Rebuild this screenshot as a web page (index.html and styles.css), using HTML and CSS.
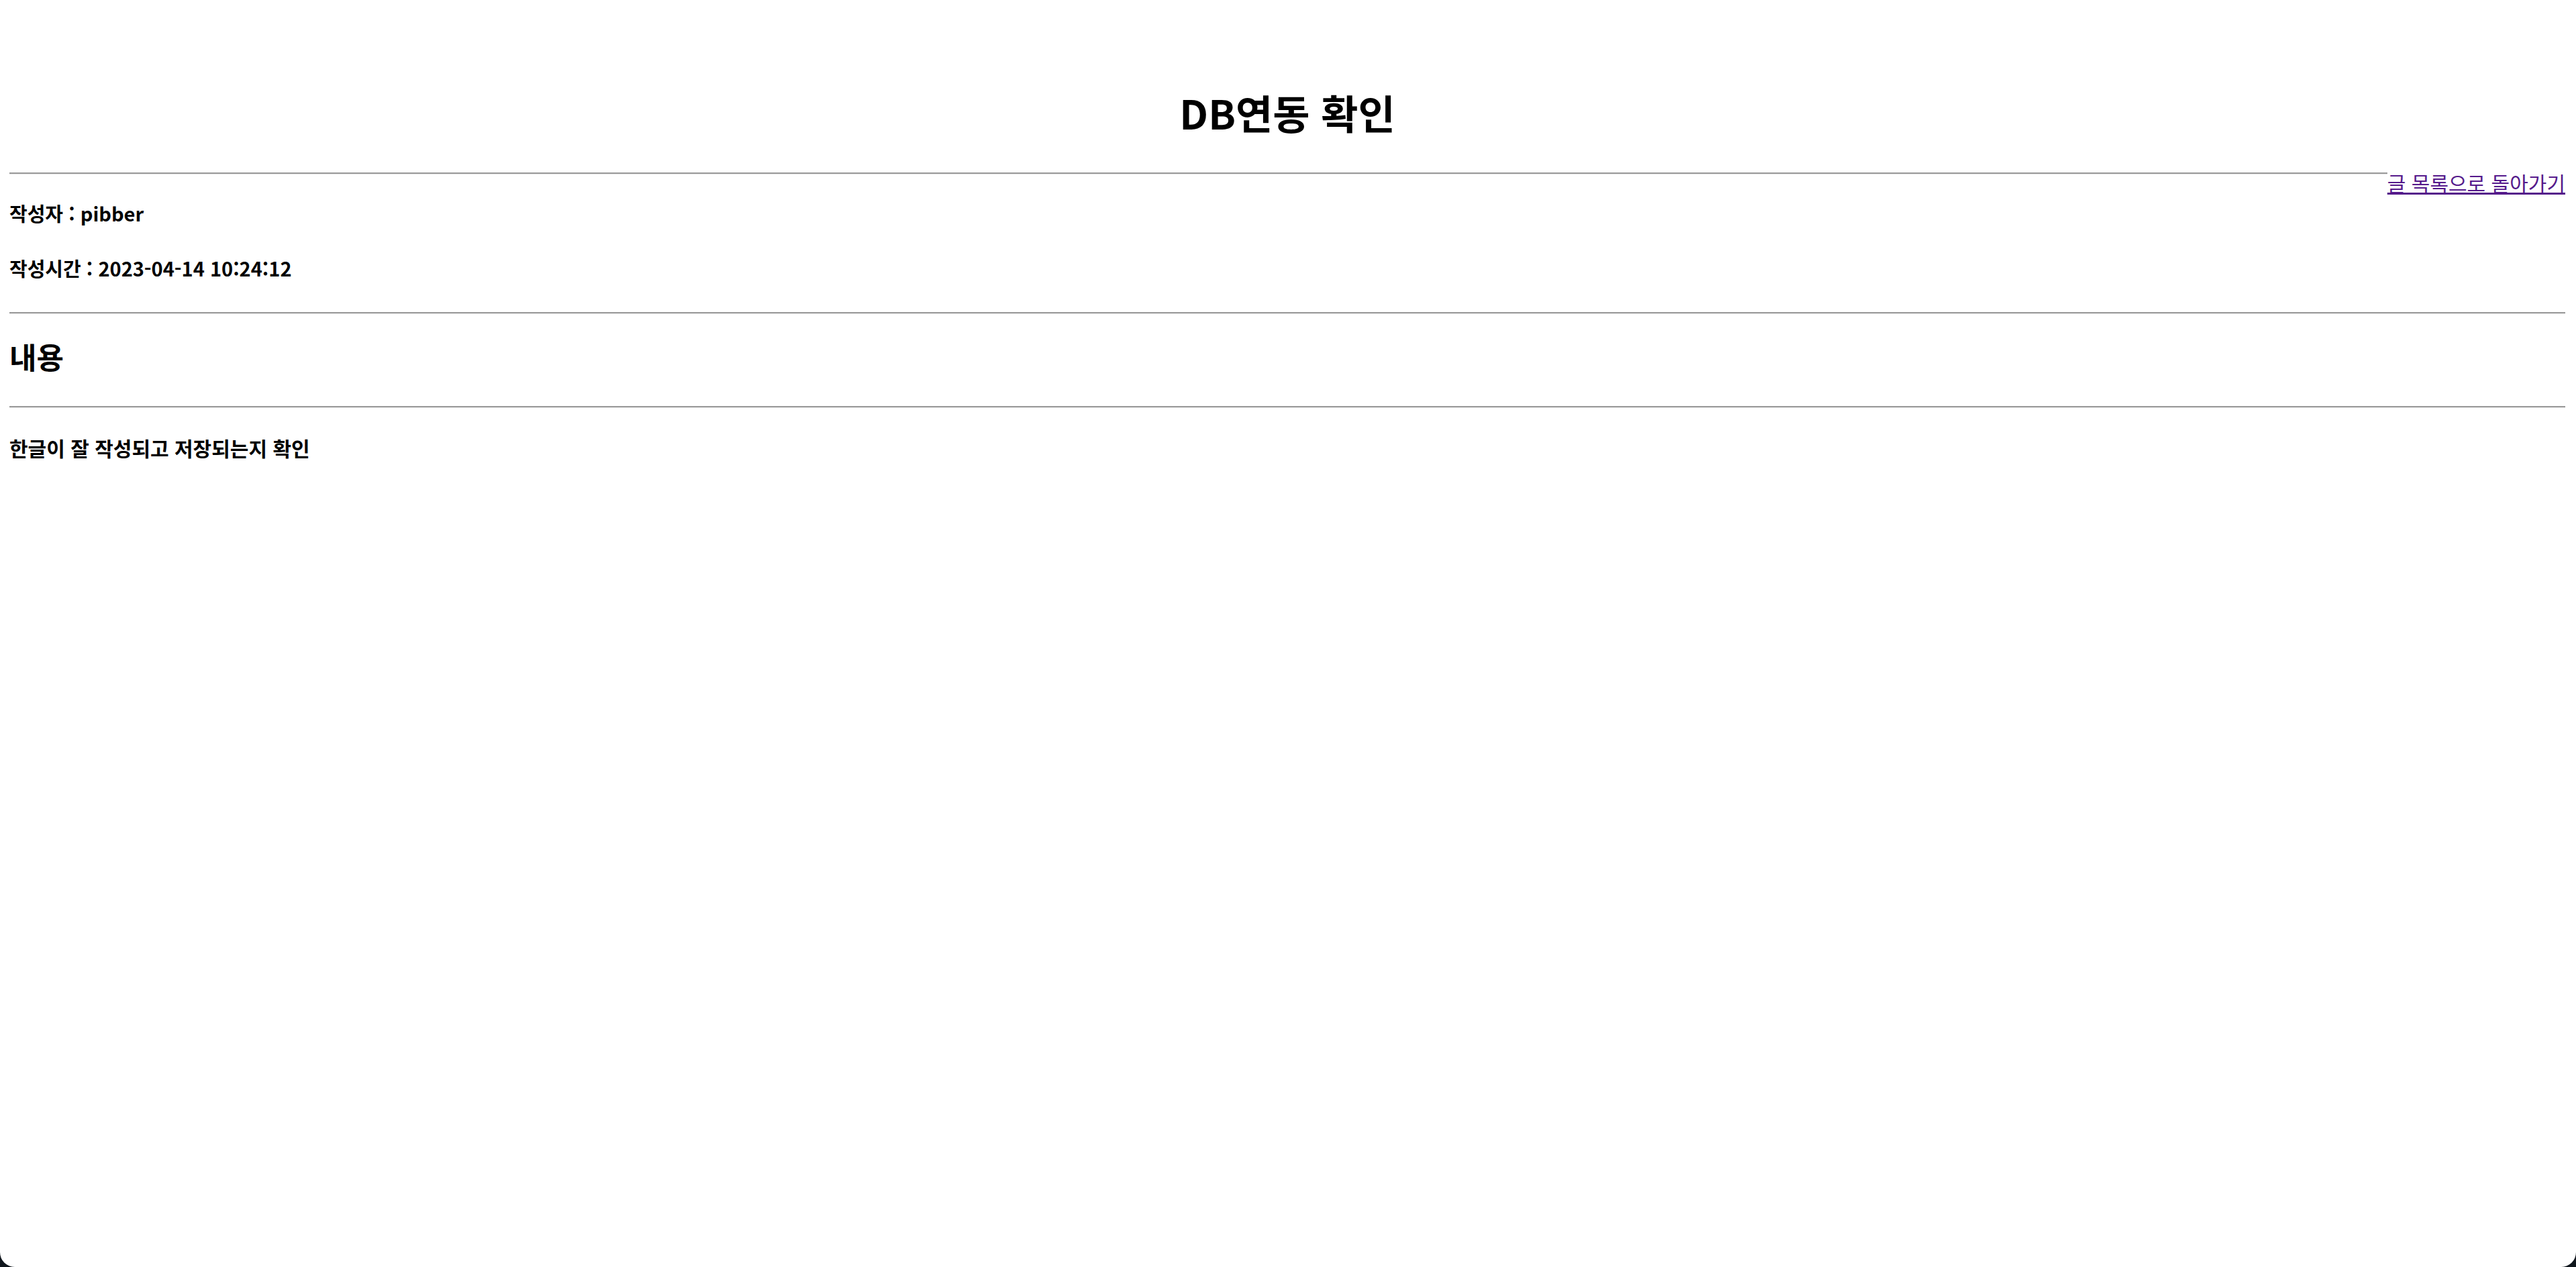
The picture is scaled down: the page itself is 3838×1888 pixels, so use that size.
FILE: index.html
```html
<!DOCTYPE html>
<html lang="ko">
<head>
    <meta charset="UTF-8">
    <title>DB연동 확인</title>
    <link rel="stylesheet" href="styles.css">
</head>
<body>
<div id="page">
    <h1 class="title">DB연동 확인</h1>
    <a class="back" href="#">글 목록으로 돌아가기</a>
    <hr>
    <div class="info">
        <h4>작성자 : pibber</h4>
        <h4>작성시간 : 2023-04-14 10:24:12</h4>
    </div>
    <hr>
    <h2 class="label">내용</h2>
    <hr>
    <h4 class="content">한글이 잘 작성되고 저장되는지 확인</h4>
</div>
</body>
</html>
```

FILE: styles.css
```css
*{
    margin: 0;
    padding: 0;
}
html{
    background: #10161d;
}
body{
    font-family: "Noto Sans CJK KR", "Noto Sans", sans-serif;
    color: #000;
}
#page{
    min-height: 100vh;
    background: #fff;
    padding: 0 16px 0 14px;
    box-sizing: border-box;
    border-radius: 0 0 22px 22px;
    overflow: hidden;
}
hr{
    height: 0;
    overflow: hidden;
    border: none;
    border-top: 2px solid #9a9a9a;
    border-bottom: 1px solid #e6e6e6;
}
.title{
    text-align: center;
    font-size: 60px;
    line-height: 80px;
    font-weight: bold;
    padding-top: 127px;
    margin-bottom: 50px;
}
.back{
    float: right;
    font-size: 30px;
    line-height: 30px;
    color: #551a8b;
    text-decoration: underline;
}
.info{
    display: flex;
    flex-direction: column;
    gap: 46px;
    padding: 39px 0 48px;
}
.info h4{
    font-size: 29px;
    line-height: 36px;
}
.label{
    font-size: 44px;
    line-height: 50px;
    margin: 38px 0 49px;
}
.content{
    font-size: 30px;
    line-height: 36px;
    margin-top: 41px;
}
```
